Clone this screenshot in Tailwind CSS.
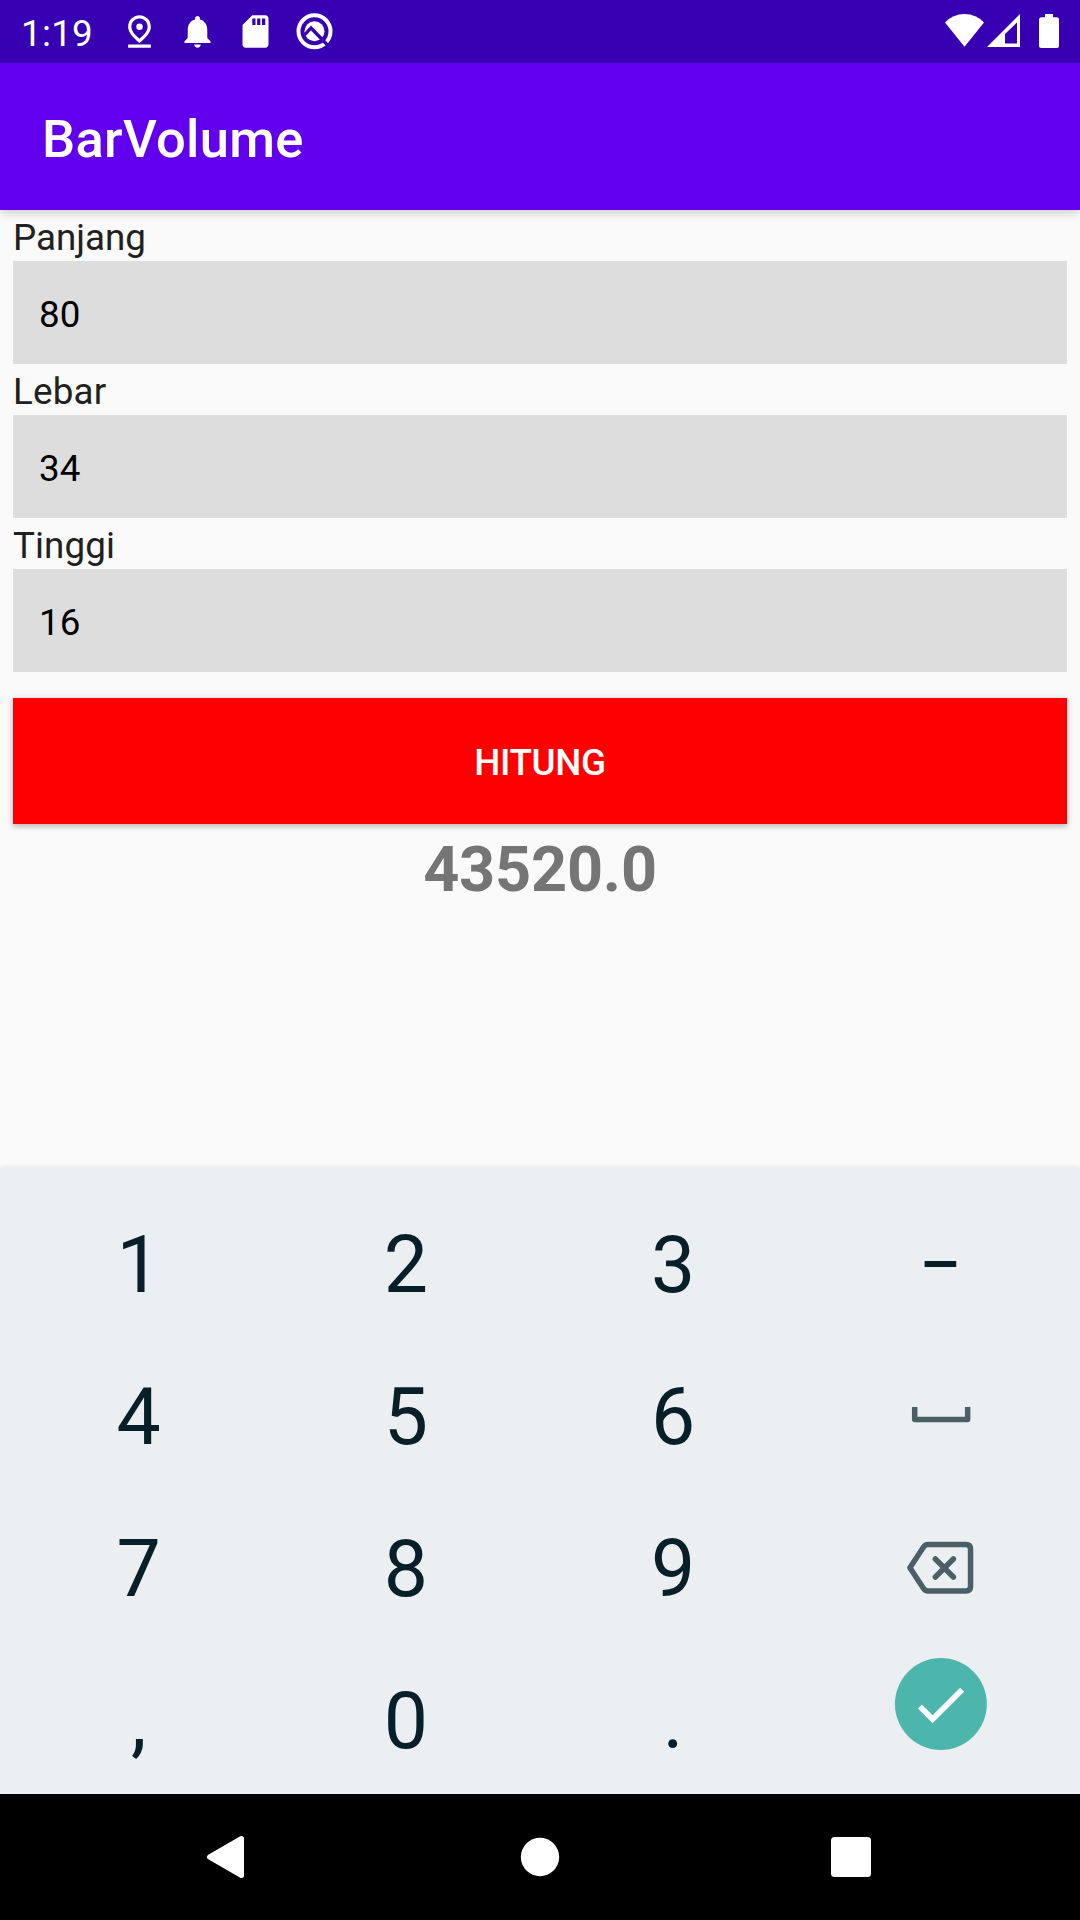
<!DOCTYPE html>
<html lang="id">
<head>
<meta charset="utf-8">
<title>BarVolume</title>
<script src="https://cdn.jsdelivr.net/npm/@tailwindcss/browser@4"></script>
</head>
<body class="flex h-[1920px] w-[1080px] flex-col overflow-hidden bg-[#fafafa] font-[Roboto,sans-serif]">
  <header class="z-10 h-[210px] shrink-0 bg-[#6200ee] shadow-[0_3px_9px_rgba(0,0,0,0.18)]">
    <div class="flex h-[63px] items-center justify-between bg-[#3700b3] text-white">
      <div class="flex items-center pl-[21px]">
        <span class="w-[99px] pt-[3px] text-[36.75px] leading-[63px] tracking-[0.3px] whitespace-nowrap">1:19</span>
        <svg class="mr-[19px] size-[39px]" viewBox="0 0 24 24" fill="currentColor"><path d="M12 4c1.930 0 5 1.400 5 5.150 0 2.160-1.720 4.670-5 7.320-3.280-2.650-5-5.170-5-7.320C7 5.400 10.070 4 12 4m0-2C8.730 2 5 4.460 5 9.150c0 3.120 2.330 6.410 7 9.850 4.670-3.440 7-6.730 7-9.850C19 4.460 15.270 2 12 2zM5 20h14v2H5z"/><circle cx="12" cy="9" r="2"/></svg>
        <svg class="mr-[19px] size-[39px]" viewBox="0 0 24 24" fill="currentColor"><path d="M12 22c1.1 0 2-.9 2-2h-4c0 1.1.89 2 2 2zm6-6v-5c0-3.070-1.640-5.640-4.500-6.320V4c0-.83-.67-1.500-1.500-1.500s-1.500.67-1.500 1.500v.68C7.630 5.360 6 7.920 6 11v5l-2 2v1h16v-1l-2-2z"/></svg>
        <svg class="mr-[19.500px] size-[39px]" viewBox="0 0 24 24" fill="currentColor"><path d="M18 2h-8L4.020 8 4 20c0 1.100.9 2 2 2h12c1.100 0 2-.9 2-2V4c0-1.100-.9-2-2-2zm-6 6h-2V4h2v4zm3 0h-2V4h2v4zm3 0h-2V4h2v4z"/></svg>
        <svg class="size-[39px]" viewBox="0 0 39 39" fill="none"><circle cx="19.500" cy="19.300" r="16" stroke="currentColor" stroke-width="4"/><circle cx="19.500" cy="19.300" r="10" fill="currentColor"/><path d="M9.500 23l6.500-7 17 17.500" stroke="#3700b3" stroke-width="3.300"/></svg>
      </div>
      <svg class="mr-[10px] h-[63px] w-[130px]" viewBox="940 0 130 63" fill="currentColor"><path d="M945 22.500Q953 14 964.500 14T984 22.500L964.500 46.700z"/><path fill-rule="evenodd" d="M1020 14v33h-33zM1017 22.500L1005 34v9.500h12z"/><path d="M1045 14h8v3.300h3.500q2.500 0 2.500 2.500V45.500q0 2.500-2.500 2.500h-15q-2.500 0-2.500-2.500V19.800q0-2.500 2.500-2.500h3.500z"/></svg>
    </div>
    <h1 class="pl-[42px] text-[52.5px] leading-[152px] font-medium tracking-[0.3px] text-white">BarVolume</h1>
  </header>
  <main class="h-[958px] shrink-0 px-[13px] text-[36.75px]">
    <label class="block h-[51px] leading-[55px] text-[#212121]">Panjang</label>
    <div class="h-[103px] bg-[#ddd] pl-[26px] leading-[107px] text-black">80</div>
    <label class="block h-[51px] leading-[55px] tracking-[0.2px] text-[#212121]">Lebar</label>
    <div class="h-[103px] bg-[#ddd] pl-[26px] leading-[107px] text-black">34</div>
    <label class="block h-[51px] leading-[55px] tracking-[0.1px] text-[#212121]">Tinggi</label>
    <div class="h-[103px] bg-[#ddd] pl-[26px] leading-[107px] text-black">16</div>
    <button class="mt-[26px] block h-[126px] w-full bg-[#f00] leading-[129px] font-medium tracking-[-0.3px] text-white shadow-[0_2px_6px_rgba(0,0,0,0.3)]">HITUNG</button>
    <p class="text-center text-[63px] leading-[91px] font-bold tracking-[-0.2px] text-[#757575]">43520.0</p>
  </main>
  <section class="grid h-[626px] shrink-0 grid-cols-4 grid-rows-[repeat(4,152px)] bg-[#ebeff2] pt-[21px] pr-[6px] pl-[5px] text-center text-[78.75px] leading-[152px] text-[#061f29] shadow-[0_-1px_5px_rgba(0,0,0,0.08)]">
    <span>1</span><span>2</span><span>3</span><span class="scale-x-[0.82]">–</span>
    <span>4</span><span>5</span><span>6</span>
    <svg class="h-[152px] w-full" viewBox="807 1341 267.500 152" fill="none" stroke="#4b5f67" stroke-width="5.500" stroke-linejoin="round"><path d="M914.800 1407v12.500h53V1407"/></svg>
    <span>7</span><span>8</span><span>9</span>
    <svg class="h-[152px] w-full" viewBox="807 1493 267.500 152" fill="none" stroke="#4b5f67" stroke-width="5.500" stroke-linejoin="round"><path d="M910 1567.700l13.500-20.500q1.800-2.700 4.500-2.700h38q4.700 0 4.700 4.700v37q0 4.700-4.700 4.700h-38q-2.700 0-4.500-2.700z"/><path stroke-linecap="round" d="M935.500 1559l18 18m0-18l-18 18"/></svg>
    <span>,</span><span>0</span><span>.</span>
    <svg class="h-[152px] w-full" viewBox="807 1645 267.500 152" fill="none"><circle cx="941" cy="1704" r="46" fill="#4db6ac"/><path d="M920 1706.500l12.700 12.700 29.500-29.500" stroke="#fff" stroke-width="5.600"/></svg>
  </section>
  <nav class="flex h-[126px] shrink-0 items-center bg-black">
    <svg class="h-[126px] w-full" viewBox="0 1794 1080 126" fill="#fff"><path d="M209.500 1857L241.500 1838.500v37z" stroke="#fff" stroke-width="5" stroke-linejoin="round"/><circle cx="540" cy="1857" r="19.200"/><rect x="831" y="1837" width="40" height="40" rx="3.500"/></svg>
  </nav>
</body>
</html>
